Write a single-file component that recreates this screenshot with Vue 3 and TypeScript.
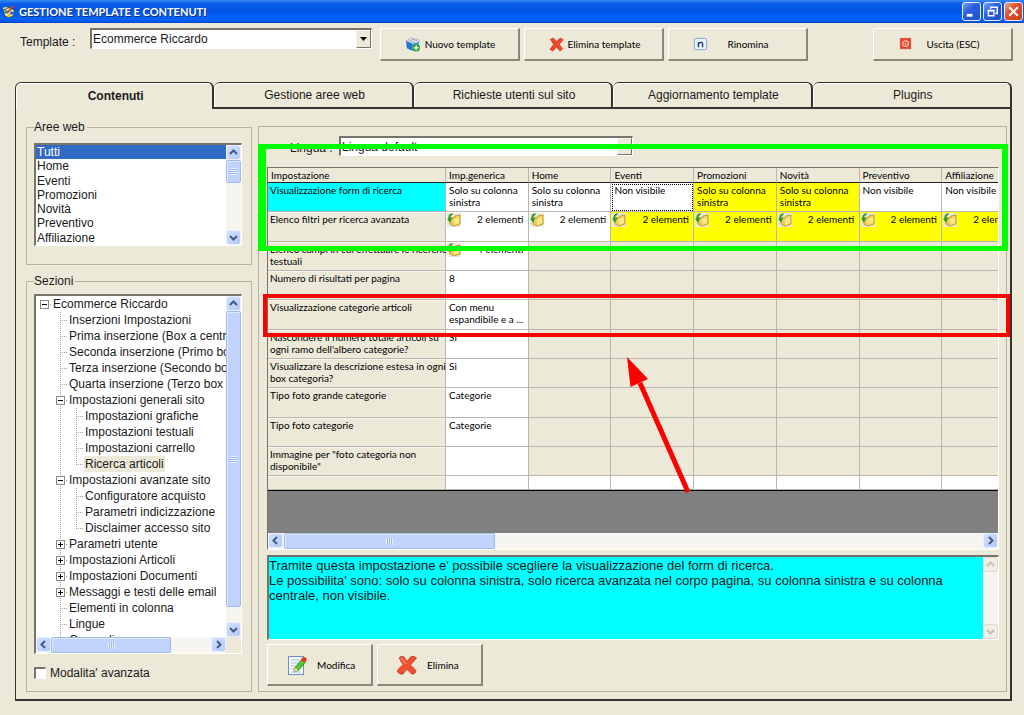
<script setup lang="ts">
import { ref } from 'vue'

interface TreeNode {
  label: string
  level: number
  box?: 'plus' | 'minus'
  last?: boolean
}
interface Cell {
  text?: string
  kind?: 'white' | 'yellow' | 'focus'
  folder?: boolean
}
interface Row {
  name: string
  active?: boolean
  cells: Cell[]
}

const templateName = ref('Ecommerce Riccardo')
const language = ref('Lingua default')
const advanced = ref(false)
const activeTab = ref(0)
const activeArea = ref(0)
const activeNode = ref(10)

const tabs = ['Contenuti', 'Gestione aree web', 'Richieste utenti sul sito', 'Aggiornamento template', 'Plugins']
const areas = ['Tutti', 'Home', 'Eventi', 'Promozioni', 'Novità', 'Preventivo', 'Affiliazione']

const tree: TreeNode[] = [
  { label: 'Ecommerce Riccardo', level: 0, box: 'minus' },
  { label: 'Inserzioni Impostazioni', level: 1 },
  { label: 'Prima inserzione (Box a centro pagina)', level: 1 },
  { label: 'Seconda inserzione (Primo box)', level: 1 },
  { label: 'Terza inserzione (Secondo box)', level: 1 },
  { label: 'Quarta inserzione (Terzo box in basso)', level: 1 },
  { label: 'Impostazioni generali sito', level: 1, box: 'minus' },
  { label: 'Impostazioni grafiche', level: 2 },
  { label: 'Impostazioni testuali', level: 2 },
  { label: 'Impostazioni carrello', level: 2 },
  { label: 'Ricerca articoli', level: 2, last: true },
  { label: 'Impostazioni avanzate sito', level: 1, box: 'minus' },
  { label: 'Configuratore acquisto', level: 2 },
  { label: 'Parametri indicizzazione', level: 2 },
  { label: 'Disclaimer accesso sito', level: 2, last: true },
  { label: 'Parametri utente', level: 1, box: 'plus' },
  { label: 'Impostazioni Articoli', level: 1, box: 'plus' },
  { label: 'Impostazioni Documenti', level: 1, box: 'plus' },
  { label: 'Messaggi e testi delle email', level: 1, box: 'plus' },
  { label: 'Elementi in colonna', level: 1 },
  { label: 'Lingue', level: 1 },
  { label: 'Generali', level: 1 },
]

const columns = ['Imp.generica', 'Home', 'Eventi', 'Promozioni', 'Novità', 'Preventivo', 'Affiliazione']

const only = (first: Cell): Cell[] => [first, {}, {}, {}, {}, {}, {}]
const side = 'Solo su colonna\nsinistra'
const two = (kind: 'white' | 'yellow'): Cell => ({ text: '2 elementi', kind, folder: true })

const rows: Row[] = [
  {
    name: 'Visualizzazione form di ricerca',
    active: true,
    cells: [
      { text: side, kind: 'white' },
      { text: side, kind: 'white' },
      { text: 'Non visibile', kind: 'focus' },
      { text: side, kind: 'yellow' },
      { text: side, kind: 'yellow' },
      { text: 'Non visibile', kind: 'white' },
      { text: 'Non visibile', kind: 'white' },
    ],
  },
  {
    name: 'Elenco filtri per ricerca avanzata',
    cells: [two('white'), two('white'), two('yellow'), two('yellow'), two('yellow'), two('yellow'), two('yellow')],
  },
  { name: 'Elenco campi in cui effettuare le ricerche\ntestuali', cells: only({ text: '4 elementi', kind: 'white', folder: true }) },
  { name: 'Numero di risultati per pagina', cells: only({ text: '8', kind: 'white' }) },
  { name: 'Visualizzazione categorie articoli', cells: only({ text: 'Con menu\nespandibile e a ...', kind: 'white' }) },
  { name: "Nascondere il numero totale articoli su\nogni ramo dell'albero categorie?", cells: only({ text: 'Si', kind: 'white' }) },
  { name: 'Visualizzare la descrizione estesa in ogni\nbox categoria?', cells: only({ text: 'Si', kind: 'white' }) },
  { name: 'Tipo foto grande categorie', cells: only({ text: 'Categorie', kind: 'white' }) },
  { name: 'Tipo foto categorie', cells: only({ text: 'Categorie', kind: 'white' }) },
  { name: 'Immagine per "foto categoria non\ndisponibile"', cells: only({ kind: 'white' }) },
  { name: '', cells: columns.map((): Cell => ({ kind: 'white' })) },
]

const help =
  "Tramite questa impostazione e' possibile scegliere la visualizzazione del form di ricerca.\n" +
  "Le possibilita' sono: solo su colonna sinistra, solo ricerca avanzata nel corpo pagina, su colonna sinistra e su colonna centrale, non visibile."
</script>

<template>
  <div class="window">
    <header class="titlebar">
      <svg class="app-icon" viewBox="0 0 16 16" aria-hidden="true">
        <path d="M2 6 L8 3 L14 6 L13 12 Q8 16 3 12 Z" fill="#e8efe4" stroke="#3b4a3b" />
        <circle cx="5" cy="8" r="2" fill="#2e9b35" />
        <circle cx="8" cy="12" r="2" fill="#f3c316" />
        <circle cx="11" cy="9" r="2" fill="#2e62c9" />
        <path d="M6 9 L13 1" stroke="#e03a1c" stroke-width="2" />
        <path d="M1 4 L6 3" stroke="#f6d94a" stroke-width="2" />
      </svg>
      <h1>GESTIONE TEMPLATE E CONTENUTI</h1>
      <div class="window-buttons">
        <button type="button" aria-label="Riduci a icona">
          <svg viewBox="0 0 18 18"><path d="M4 13h6" stroke="#fff" stroke-width="3" /></svg>
        </button>
        <button type="button" aria-label="Ripristina">
          <svg viewBox="0 0 18 18" fill="none" stroke="#fff">
            <path d="M7 6V4.500h7V11h-2" stroke-width="1.600" />
            <path d="M4.500 8h6v5.500h-6z" stroke-width="1.400" /><path d="M4 8h7" stroke-width="2" />
          </svg>
        </button>
        <button type="button" class="close" aria-label="Chiudi">
          <svg viewBox="0 0 18 18"><path d="M4.500 4.500l9 9M13.500 4.500l-9 9" stroke="#fff" stroke-width="2.200" /></svg>
        </button>
      </div>
    </header>

    <div class="toolbar">
      <label for="template">Template :</label>
      <div class="combo">
        <select id="template" v-model="templateName">
          <option>Ecommerce Riccardo</option>
        </select>
        <span class="combo-arrow"><svg viewBox="0 0 7 4"><path d="M0 0h7L3.500 4z" /></svg></span>
      </div>
      <button type="button" class="push">
        <svg class="ico" viewBox="0 0 16 16" aria-hidden="true">
          <path d="M1 4 L8 6 V15 L2 12 Z" fill="#1e78d2" />
          <path d="M8 6 L15 4 V12 L8 15 Z" fill="#4fa8ee" />
          <path d="M1 4 L7 1 L15 3 V5 L8 7 Z" fill="#dfe5ea" stroke="#9aa4ad" stroke-width=".6" />
          <path d="M4 3.500l6 1.800M7 2.200l6 1.500" stroke="#8f9aa5" stroke-width=".8" />
          <circle cx="12" cy="11.500" r="4" fill="#27a52b" />
          <path d="M12 9v5M9.500 11.500h5" stroke="#fff" stroke-width="1.500" />
        </svg>
        <span>Nuovo template</span>
      </button>
      <button type="button" class="push">
        <svg class="ico" viewBox="0 0 16 16" aria-hidden="true">
          <path d="M1.500 2.500L4.500 1L8 5L12 1L15 3L11 8L14.500 12.500L12 15L8 11L4 15L1 13L5 8Z" fill="#f0482a" stroke="#cf3217" stroke-width=".8" stroke-linejoin="round" />
        </svg>
        <span>Elimina template</span>
      </button>
      <button type="button" class="push">
        <svg class="ico" viewBox="0 0 16 16" aria-hidden="true">
          <rect x="1.500" y="1.500" width="13" height="12" rx="2" fill="#eef4fd" stroke="#7d9fd3" />
          <path d="M5.800 11V5.500M5.800 7.200Q10.200 3.800 10.200 7.500V11" fill="none" stroke="#2a3f7c" stroke-width="1.600" />
        </svg>
        <span>Rinomina</span>
      </button>
      <button type="button" class="push exit">
        <svg class="ico" viewBox="0 0 16 16" aria-hidden="true">
          <rect x="2.500" y="1.500" width="11" height="11" fill="#e8432c" stroke="#d9543f" />
          <circle cx="8" cy="7" r="3" fill="none" stroke="#ffd2c8" stroke-width="1.200" />
          <circle cx="8" cy="7" r="1" fill="#ffd2c8" />
        </svg>
        <span>Uscita (ESC)</span>
      </button>
    </div>

    <nav class="tabs" role="tablist">
      <button
        v-for="(tab, i) in tabs"
        :key="tab"
        type="button"
        role="tab"
        :aria-selected="i === activeTab"
        :class="{ active: i === activeTab }"
        @click="activeTab = i"
      >{{ tab }}</button>
    </nav>

    <main class="page">
      <div class="left">
        <fieldset class="group areas">
          <legend>Aree web</legend>
          <div class="sunken list">
            <ul role="listbox" aria-label="Aree web">
              <li
                v-for="(area, i) in areas"
                :key="area"
                role="option"
                :aria-selected="i === activeArea"
                :class="{ selected: i === activeArea }"
                @click="activeArea = i"
              >{{ area }}</li>
            </ul>
            <div class="vbar">
              <button type="button" class="sb" aria-label="Su"><svg viewBox="0 0 9 9"><path d="M1 6l3.500-3.500L8 6" /></svg></button>
              <div class="thumb short"><i></i></div>
              <div class="track"></div>
              <button type="button" class="sb" aria-label="Giù"><svg viewBox="0 0 9 9"><path d="M1 3l3.500 3.500L8 3" /></svg></button>
            </div>
          </div>
        </fieldset>

        <fieldset class="group sections">
          <legend>Sezioni</legend>
          <div class="sunken tree-box">
            <ul class="tree" role="tree" aria-label="Sezioni">
              <li v-for="(node, i) in tree" :key="node.label" role="treeitem" :aria-selected="i === activeNode" @click="activeNode = i">
                <svg v-for="n in node.level + 1" :key="n" class="guide" viewBox="0 0 16 16" aria-hidden="true">
                  <path v-if="n > 1 && n <= node.level" d="M8.500 0v16" />
                  <template v-if="n === node.level + 1">
                    <path v-if="node.level > 0" :d="node.last ? 'M8.500 0v9' : 'M8.500 0v16'" />
                    <path d="M8 8.500h8" />
                    <g v-if="node.box">
                      <rect class="box" x="4.500" y="4.500" width="8" height="8" />
                      <path class="sign" d="M6 8.500h5" />
                      <path v-if="node.box === 'plus'" class="sign" d="M8.500 6v5" />
                    </g>
                  </template>
                </svg>
                <span :class="{ current: i === activeNode }">{{ node.label }}</span>
              </li>
            </ul>
            <div class="vbar">
              <button type="button" class="sb" aria-label="Su"><svg viewBox="0 0 9 9"><path d="M1 6l3.500-3.500L8 6" /></svg></button>
              <div class="thumb long"><i></i></div>
              <div class="track"></div>
              <button type="button" class="sb" aria-label="Giù"><svg viewBox="0 0 9 9"><path d="M1 3l3.500 3.500L8 3" /></svg></button>
            </div>
            <div class="hbar">
              <button type="button" class="sb" aria-label="Sinistra"><svg viewBox="0 0 9 9"><path d="M6 1L2.500 4.500L6 8" /></svg></button>
              <div class="thumb"><i></i></div>
              <div class="track"></div>
              <button type="button" class="sb" aria-label="Destra"><svg viewBox="0 0 9 9"><path d="M3 1l3.500 3.500L3 8" /></svg></button>
            </div>
          </div>
          <label class="check"><input v-model="advanced" type="checkbox" /><span>Modalita' avanzata</span></label>
        </fieldset>
      </div>

      <section class="settings">
        <div class="language">
          <label for="language">Lingua :</label>
          <div class="combo">
            <select id="language" v-model="language">
              <option>Lingua default</option>
            </select>
            <span class="combo-arrow"></span>
          </div>
        </div>

        <div class="sunken grid">
          <div class="grid-view">
            <table>
              <colgroup><col class="name-col" /><col v-for="c in columns" :key="c" /></colgroup>
              <thead>
                <tr><th scope="col">Impostazione</th><th v-for="c in columns" :key="c" scope="col">{{ c }}</th></tr>
              </thead>
              <tbody>
                <tr v-for="row in rows" :key="row.name">
                  <th scope="row" :class="{ active: row.active }">{{ row.name }}</th>
                  <td v-for="(cell, i) in row.cells" :key="i" :class="cell.kind">
                    <div v-if="cell.folder" class="items">
                      <svg viewBox="0 0 14 14" aria-hidden="true">
                        <rect width="14" height="14" fill="#e9e7da" />
                        <path d="M3 4l4 1 1-2 5-1v9l-6 2-4-2z" fill="#f2cf52" stroke="#b98f1d" stroke-width=".8" />
                        <path d="M7 6l5-2v6l-5 2z" fill="#fbe88c" />
                        <path d="M5.500 1Q1 2 2.500 7M1 5.500L2.800 8L4.500 5" fill="none" stroke="#2f9d2b" stroke-width="1.800" />
                      </svg>
                      <span>{{ cell.text }}</span>
                    </div>
                    <template v-else>{{ cell.text }}</template>
                  </td>
                </tr>
              </tbody>
            </table>
          </div>
          <div class="hbar">
            <button type="button" class="sb" aria-label="Sinistra"><svg viewBox="0 0 9 9"><path d="M6 1L2.500 4.500L6 8" /></svg></button>
            <div class="thumb"><i></i></div>
            <div class="track"></div>
            <button type="button" class="sb" aria-label="Destra"><svg viewBox="0 0 9 9"><path d="M3 1l3.500 3.500L3 8" /></svg></button>
          </div>
        </div>

        <div class="sunken help">
          <textarea readonly aria-label="Descrizione impostazione" :value="help"></textarea>
          <div class="vbar disabled">
            <button type="button" class="sb" disabled aria-label="Su"><svg viewBox="0 0 9 9"><path d="M1 6l3.500-3.500L8 6" /></svg></button>
            <div class="track"></div>
            <button type="button" class="sb" disabled aria-label="Giù"><svg viewBox="0 0 9 9"><path d="M1 3l3.500 3.500L8 3" /></svg></button>
          </div>
        </div>

        <div class="actions">
          <button type="button" class="push">
            <svg class="big" viewBox="0 0 20 20" aria-hidden="true">
              <rect x="1.500" y="1.500" width="15" height="18" fill="#f4f8fd" stroke="#6d8fc4" />
              <path d="M4 5h9M4 8h8M4 11h5M4 14h4M4 17h10" stroke="#a9bedd" />
              <path d="M7 17l1.500-5L15 4l3.500 3L12 15z" fill="#5bc62e" stroke="#2f8a17" stroke-width=".8" />
              <path d="M7 17l1.500-4 2.500 2.200z" fill="#f6e3b0" />
              <circle cx="17" cy="4.500" r="2.600" fill="#e23a22" />
            </svg>
            <span>Modifica</span>
          </button>
          <button type="button" class="push">
            <svg class="big" viewBox="0 0 20 20" aria-hidden="true">
              <path d="M2 3Q4 0 7 2L10 6.500L14 1.500Q17 .5 19.500 3L13.500 10L19 15.500L18 18Q16 20 14 18.500L10 14L6 19Q3 20 .5 17L1 14.500L6 9.500Z" fill="#f4502e" stroke="#b9361a" stroke-width=".8" stroke-linejoin="round" />
              <path d="M4 3L9 9" stroke="#ff8a66" stroke-width="1.200" />
            </svg>
            <span>Elimina</span>
          </button>
        </div>

        <div class="mark green"></div>
        <div class="mark red"></div>
        <svg class="arrow" viewBox="0 0 66 138" aria-hidden="true">
          <path d="M14 27L62 136" stroke="#f00" stroke-width="5" />
          <path d="M1 1L22 23L4.500 31z" fill="#f00" />
        </svg>
      </section>
    </main>
  </div>
</template>

<style>
body {
  background: #ece9d8;
}
</style>

<style scoped>
* {
  box-sizing: border-box;
}
.window {
  --face: #ece9d8;
  --small: Lato, "Liberation Sans", sans-serif;
  display: flex;
  flex-direction: column;
  min-height: 100vh;
  padding-bottom: 14px;
  background: var(--face);
  color: #1a1a1a;
  font: 12px/14px "Liberation Sans", Arial, sans-serif;
}
button,
select,
textarea,
input {
  margin: 0;
  font: inherit;
  color: inherit;
}
ul {
  margin: 0;
  padding: 0;
  list-style: none;
}
.titlebar {
  display: flex;
  align-items: center;
  height: 23px;
  padding: 0 1px 0 2px;
  background: linear-gradient(#3c8cf6, #0a5fe8 15%, #0054e0 45%, #0262fb 75%, #0360f8 88%, #0043c6);
}
.app-icon {
  width: 14px;
  height: 16px;
}
h1 {
  flex: 1;
  margin: 0 0 0 3px;
  color: #fff;
  font: bold 11px/16px var(--small);
  text-shadow: 1px 1px #0a318c;
}
.window-buttons {
  display: flex;
  gap: 2px;
}
.window-buttons button {
  width: 19px;
  height: 19px;
  padding: 0;
  border: 1px solid #e8effc;
  border-radius: 3px;
  background: linear-gradient(135deg, #7ba2f2, #2a5fe0 40%, #1c4fcb);
}
.window-buttons .close {
  background: linear-gradient(135deg, #f0a28c, #e2512b 40%, #c9401c);
}
.window-buttons svg {
  display: block;
  width: 17px;
  height: 17px;
}
.toolbar {
  display: flex;
  gap: 4px;
  padding: 5px 11px 21px 20px;
}
.toolbar > label {
  width: 66px;
  padding-top: 7px;
}
.toolbar .combo {
  width: 282px;
  margin-right: 4px;
}
.combo {
  position: relative;
  height: 21px;
  border: 1px solid #808080;
  border-width: 2px 1px 1px 2px;
  border-color: #77756b #fff #fff #77756b;
  background: #fff;
}
.combo select {
  display: block;
  width: 100%;
  height: 18px;
  padding: 0 0 0 1px;
  border: 0;
  outline: 0;
  background: #fff;
  appearance: none;
}
.combo-arrow {
  position: absolute;
  top: 0;
  right: 0;
  bottom: 0;
  display: grid;
  place-items: center;
  width: 15px;
  border: 1px solid;
  border-color: #f6f4ec #77756b #77756b #f6f4ec;
  background: var(--face);
  pointer-events: none;
}
.combo-arrow svg {
  width: 7px;
  height: 4px;
}
.push {
  display: flex;
  align-items: center;
  width: 140px;
  height: 33px;
  padding: 0;
  border: 1px solid;
  border-width: 1px 2px 2px 1px;
  border-color: #fff #8a8776 #8a8776 #fff;
  background: var(--face);
  color: #000;
  font: 10px/14px var(--small);
}
.toolbar .push {
  padding-left: 24px;
}
.push span {
  flex: 1;
}
.toolbar .push span {
  padding-right: 18px;
}
.exit {
  margin-left: auto;
}
.ico {
  flex: none;
  width: 15px;
  height: 15px;
}
.tabs {
  display: grid;
  grid-template-columns: repeat(5, 1fr);
  margin: 0 12px 0 15px;
}
.tabs button {
  height: 27px;
  padding: 0 0 0 3px;
  border: 1px solid #33322c;
  border-left-width: 0;
  border-right-width: 2px;
  border-bottom-width: 2px;
  border-radius: 6px 6px 0 0;
  background: var(--face);
  box-shadow: inset 1px 1px #fff;
}
.tabs button.active {
  border-left-width: 1px;
  border-bottom: 0;
  font-weight: bold;
}
.page {
  display: grid;
  flex: 1;
  grid-template-columns: 226px minmax(0, 1fr);
  gap: 6px;
  margin: 0 12px 0 15px;
  padding: 11px 3px 7px 10px;
  border: 1px solid #33322c;
  border-width: 0 2px 2px 1px;
}
.left {
  display: flex;
  flex-direction: column;
  gap: 9px;
}
.group {
  display: flex;
  flex-direction: column;
  min-width: 0;
  margin: 0;
  padding: 0 9px 0 7px;
  border: 1px solid #b5b2a4;
}
.group legend {
  height: 14px;
  padding: 0 2px 0 0;
}
.areas {
  padding-top: 9px;
  padding-bottom: 18px;
}
.sections {
  flex: 1;
  padding-top: 6px;
}
.sunken {
  border: 1px solid;
  border-width: 2px 1px 1px 2px;
  border-color: #77756b #fff #fff #77756b;
}
.list {
  display: grid;
  grid-template-columns: 1fr 15px;
  height: 103px;
  background: #fff;
}
.list ul {
  display: grid;
  grid-auto-rows: 1fr;
}
.list li {
  padding-left: 1px;
}
.list .selected {
  background: #316ac5;
  color: #fff;
}
.tree-box {
  display: grid;
  flex: 1;
  grid-template: minmax(0, 1fr) 16px / minmax(0, 1fr) 15px;
  background: var(--face);
}
.tree {
  height: 0;
  min-height: 100%;
  overflow: hidden;
  background: #fff;
}
.tree li {
  display: flex;
  height: 16px;
  line-height: 16px;
  white-space: nowrap;
}
.tree span {
  padding: 0 1px;
}
.tree .current {
  background: var(--face);
}
.guide {
  flex: none;
  width: 16px;
  height: 16px;
  fill: none;
  stroke: #a5a294;
  stroke-dasharray: 1 1;
}
.guide .box {
  fill: #fff;
  stroke: #8f8c7c;
  stroke-dasharray: none;
}
.guide .sign {
  stroke: #000;
  stroke-dasharray: none;
}
.check {
  display: flex;
  gap: 4px;
  align-items: center;
  height: 37px;
}
.check input {
  width: 12px;
  height: 12px;
  border: 1px solid;
  border-width: 2px 1px 1px 2px;
  border-color: #77756b #fff #fff #77756b;
  background: #fff;
  appearance: none;
}
.vbar,
.hbar {
  display: flex;
  background: #f6f5f0;
}
.vbar {
  flex-direction: column;
}
.sb {
  display: grid;
  flex: none;
  place-items: center;
  width: 15px;
  height: 15px;
  padding: 0;
  border: 1px solid #e8effd;
  border-radius: 3px;
  background: linear-gradient(135deg, #d3e0fe, #b4c9f7);
}
.sb svg {
  width: 9px;
  height: 9px;
  fill: none;
  stroke: #435a87;
  stroke-width: 2;
}
.disabled .sb {
  border-color: #dedbd0;
  background: #f0eee5;
}
.disabled .sb svg {
  stroke: #c5c2b6;
}
.track {
  flex: 1;
}
.thumb {
  display: grid;
  place-items: center;
  border: 1px solid #9fb8ee;
  border-radius: 2px;
  background: #c1d3fb;
  box-shadow: inset 1px 1px #dfe9fe;
}
.thumb i {
  width: 7px;
  height: 7px;
  background: repeating-linear-gradient(#e8f0fe 0 1px, #9db6ec 1px 2px);
}
.hbar .thumb i {
  background: repeating-linear-gradient(90deg, #e8f0fe 0 1px, #9db6ec 1px 2px);
}
.thumb.short {
  height: 23px;
}
.thumb.long {
  flex: 20;
}
.tree-box .hbar .thumb {
  width: 120px;
}
.settings {
  position: relative;
  display: flex;
  flex-direction: column;
  min-width: 0;
  margin-top: 6px;
  padding: 9px 7px 5px 8px;
  border: 1px solid #b5b2a4;
}
.language {
  display: flex;
  margin-bottom: 11px;
  padding-left: 23px;
}
.language label {
  width: 49px;
  padding-top: 5px;
}
.language .combo {
  width: 294px;
  height: 20px;
}
.grid {
  display: flex;
  flex: 1;
  flex-direction: column;
  background: #808080;
  border-width: 1px;
}
.grid-view {
  flex: 1;
  overflow: hidden;
}
.grid .hbar {
  height: 16px;
}
.grid .hbar .thumb {
  width: 211px;
  margin-left: 1px;
}
table {
  width: 757px;
  border-bottom: 1px solid #000;
  border-spacing: 0;
  table-layout: fixed;
  color: #000;
  font: 10px/12px var(--small);
}
.name-col {
  width: 178px;
}
th,
td {
  height: 29px;
  padding: 1px 0 0 3px;
  border: 0 solid #b9b7ae;
  border-width: 0 1px 1px 0;
  background: var(--face);
  font-weight: normal;
  text-align: left;
  vertical-align: top;
  white-space: pre;
}
tbody tr:nth-child(3n + 2) > * {
  height: 30px;
}
thead th {
  height: 15px;
  border-bottom-color: #222;
}
tbody tr:last-child > * {
  height: 14px;
}
tbody th {
  padding-left: 2px;
  box-shadow: inset 0 1px #f8f6ee;
}
tbody th.active {
  background: #0ff;
  box-shadow: none;
}
td.white,
td.focus {
  background: #fff;
}
td.yellow {
  background: #ff0;
}
td.focus {
  outline: 1px dotted #000;
  outline-offset: -2px;
}
.items {
  display: flex;
  gap: 16px;
  margin-left: -2px;
}
.items svg {
  flex: none;
  width: 14px;
  height: 14px;
}
.help {
  display: flex;
  height: 85px;
  margin-top: 5px;
}
.help textarea {
  flex: 1;
  min-width: 0;
  padding: 1px 0 0;
  overflow: hidden;
  border: 0;
  outline: 0;
  background: #0ff;
  font-size: 13px;
  line-height: 15px;
  resize: none;
}
.actions {
  display: flex;
  gap: 4px;
  margin-top: 4px;
}
.actions .push {
  gap: 10px;
  width: 106px;
  height: 42px;
  padding-left: 19px;
}
.actions .push span {
  text-align: left;
}
.big {
  flex: none;
  width: 20px;
  height: 20px;
}
.mark {
  position: absolute;
  pointer-events: none;
}
.green {
  top: 17px;
  right: -2px;
  left: -1px;
  height: 107px;
  border: 5px solid #0f0;
  border-right-width: 6px;
  border-left-width: 8px;
}
.red {
  top: 167px;
  right: -4px;
  left: 4px;
  height: 43px;
  border: 4px solid #f00;
}
.arrow {
  position: absolute;
  top: 229px;
  left: 367px;
  width: 66px;
  height: 138px;
  pointer-events: none;
}
</style>
